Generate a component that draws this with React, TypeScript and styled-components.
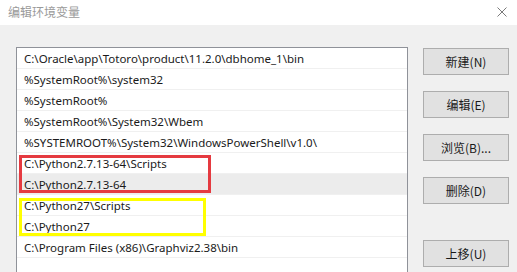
import React from 'react';
import styled, { createGlobalStyle } from 'styled-components';

const GlobalStyle = createGlobalStyle`
  html, body {
    margin: 0;
    padding: 0;
    background: #f0f0f0;
    overflow: hidden;
  }
  body {
    font-family: "Noto Sans", "Noto Sans CJK SC", sans-serif;
  }
`;

const Window = styled.div`
  width: 517px;
  height: 272px;
  display: flex;
  flex-direction: column;
  overflow: hidden;
`;

const TitleBar = styled.div`
  height: 25px;
  background: #ffffff;
  display: flex;
  align-items: center;
  justify-content: space-between;
  padding: 0 8px 0 8px;
  flex-shrink: 0;
`;

const Title = styled.span`
  font-family: "Noto Sans CJK SC", sans-serif;
  font-size: 12px;
  color: #9a9a9a;
  margin-top: -2px;
`;

const CloseIcon = styled.svg`
  width: 10px;
  height: 10px;
  margin-right: 2px;
  margin-top: -2px;
`;

const Body = styled.div`
  display: flex;
  gap: 15px;
  padding: 22px 0 0 16px;
`;

const ListBox = styled.div`
  position: relative;
  width: 390px;
  height: 240px;
  background: #ffffff;
  border: 1px solid #8f9299;
  border-bottom: none;
`;

const Row = styled.div<{ $selected?: boolean }>`
  height: 20px;
  border-bottom: 1px solid #f0f0f0;
  background: ${(p) => (p.$selected ? '#ececec' : '#ffffff')};
  padding-left: 7px;
  display: flex;
  align-items: center;
  font-size: 11.5px;
  color: #1a1a1a;
  white-space: nowrap;
`;

const Mark = styled.div<{ $color: string; $top: number; $width: number }>`
  position: absolute;
  left: 2px;
  top: ${(p) => p.$top}px;
  width: ${(p) => p.$width}px;
  height: 38px;
  box-sizing: border-box;
  border: 3px solid ${(p) => p.$color};
  pointer-events: none;
`;

const Buttons = styled.div`
  display: flex;
  flex-direction: column;
  gap: 16px;
  padding-top: 1px;
`;

const Button = styled.button<{ $gapBefore?: number }>`
  width: 86px;
  height: 27px;
  margin-top: ${(p) => p.$gapBefore ?? 0}px;
  background: #e1e1e1;
  border: 1px solid #adadad;
  font-family: "Noto Sans CJK SC", sans-serif;
  font-size: 12px;
  color: #1a1a1a;
  padding: 0;
  cursor: pointer;
`;

const paths = [
  'C:\\Oracle\\app\\Totoro\\product\\11.2.0\\dbhome_1\\bin',
  '%SystemRoot%\\system32',
  '%SystemRoot%',
  '%SystemRoot%\\System32\\Wbem',
  '%SYSTEMROOT%\\System32\\WindowsPowerShell\\v1.0\\',
  'C:\\Python2.7.13-64\\Scripts',
  'C:\\Python2.7.13-64',
  'C:\\Python27\\Scripts',
  'C:\\Python27',
  'C:\\Program Files (x86)\\Graphviz2.38\\bin',
];

const App = () => {
  return (
    <Window>
      <GlobalStyle />
      <TitleBar>
        <Title>编辑环境变量</Title>
        <CloseIcon viewBox="0 0 10 10">
          <path d="M0.5 0.5 L9.5 9.5 M9.5 0.5 L0.5 9.5" stroke="#7a7a7a" strokeWidth="1" />
        </CloseIcon>
      </TitleBar>
      <Body>
        <ListBox>
          {paths.map((p, i) => (
            <Row key={p} $selected={i === 6}>
              {p}
            </Row>
          ))}
          <Mark $color="#e53a40" $top={107} $width={192} />
          <Mark $color="#ffff00" $top={150} $width={187} />
        </ListBox>
        <Buttons>
          <Button>新建(N)</Button>
          <Button>编辑(E)</Button>
          <Button>浏览(B)...</Button>
          <Button>删除(D)</Button>
          <Button $gapBefore={20}>上移(U)</Button>
        </Buttons>
      </Body>
    </Window>
  );
};

export default App;
